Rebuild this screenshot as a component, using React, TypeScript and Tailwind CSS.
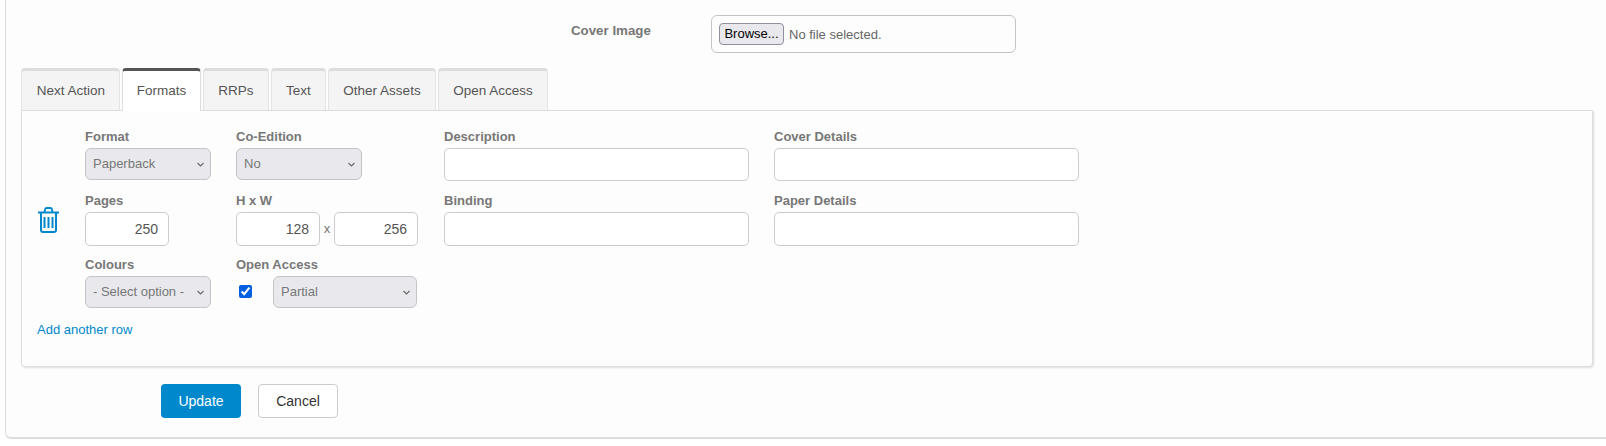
function Label({ children }: { children: React.ReactNode }) {
  return <div className="mb-[3px] h-[17px] text-[13px] font-bold leading-[17px] text-[#777777]">{children}</div>;
}

function Select({ value, className = "" }: { value: string; className?: string }) {
  return (
    <div className={`flex h-8 items-center justify-between rounded-[6px] border border-[#c4c4c4] bg-[#e9e9ed] pl-[7px] pr-[6px] text-[13px] text-[#777777] ${className}`}>
      <span>{value}</span>
      <svg width="7" height="5" viewBox="0 0 7 5" fill="none" stroke="#666666" strokeWidth="1.1">
        <path d="M0.5 1l3 3 3-3" />
      </svg>
    </div>
  );
}

function Input({ value = "", className = "" }: { value?: string; className?: string }) {
  return (
    <div className={`flex h-[34px] items-center justify-end rounded-[5px] border border-[#cccccc] bg-white pr-[10px] text-[14px] text-[#555555] ${className}`}>
      {value}
    </div>
  );
}

function Tab({ label, active = false, className = "" }: { label: string; active?: boolean; className?: string }) {
  return (
    <div
      className={
        active
          ? `-mb-px flex h-[43px] items-center justify-center rounded-t-[4px] border-x border-t-[3px] border-x-[#dddddd] border-t-[#555555] bg-white text-[13.5px] text-[#555555] ${className}`
          : `flex h-[42px] items-center justify-center rounded-t-[4px] border-x border-t-[3px] border-x-[#e4e4e4] border-t-[#dddddd] bg-[#f4f4f4] pt-px text-[13.5px] text-[#555555] ${className}`
      }
    >
      {label}
    </div>
  );
}

export default function App() {
  return (
    <div className="h-[446px] w-[1606px] overflow-hidden bg-white pl-[5px] font-['Liberation_Sans',Arial,sans-serif]">
      <div className="h-[439px] rounded-bl-[6px] border-b-2 border-l border-[#dddddd] bg-[#fdfdfd] pl-[15px]">
        <div className="flex h-[68px] pt-[15px]">
          <div className="ml-[550px] w-[140px] pt-[8px] text-[13.3px] font-bold leading-[15px] text-[#777777]">Cover Image</div>
          <div className="flex h-[38px] w-[305px] items-start rounded-[6px] border border-[#c4c4c4] bg-[#fdfdfd] pl-[7px] pt-[7px] text-[13px] text-[#666666]">
            <div className="flex h-[22px] w-[65px] items-center justify-center rounded-[4px] border border-[#8f8f9d] bg-[#e9e9ed] text-[13px] text-black">Browse...</div>
            <span className="ml-[5px] leading-[23px]">No file selected.</span>
          </div>
        </div>
        <div className="flex gap-[2px]">
          <Tab label="Next Action" className="w-[99px] pl-px" />
          <Tab label="Formats" active className="w-[79px]" />
          <Tab label="RRPs" className="w-[66px]" />
          <Tab label="Text" className="w-[55px]" />
          <Tab label="Other Assets" className="w-[108px]" />
          <Tab label="Open Access" className="w-[110px]" />
        </div>
        <div className="h-[257px] w-[1572px] rounded-b-[4px] border border-[#dddddd] bg-[#fdfdfd] shadow-[1px_1px_2px_rgba(0,0,0,0.12)]">
          <div className="flex pt-[17px]">
            <div className="w-[63px] shrink-0 pl-[16px] pt-[79px]">
              <svg width="21" height="26" viewBox="0 0 21 26" fill="none" stroke="#0088cc" strokeWidth="2">
                <path d="M6.5 5l.6-2.6A1.5 1.5 0 0 1 8.5 1h4a1.5 1.5 0 0 1 1.4 1.4L14.5 5" />
                <path d="M0 5.5h21" />
                <path d="M3 6v17a2 2 0 0 0 2 2h11a2 2 0 0 0 2-2V6" />
                <path d="M6.5 10v11M10.5 10v11M14.5 10v11" />
              </svg>
            </div>
            <div className="flex w-[151px] flex-col gap-[10px]">
              <div className="h-[54px]"><Label>Format</Label><Select value="Paperback" className="mt-[2px] w-[126px]" /></div>
              <div className="h-[54px]"><Label>Pages</Label><Input value="250" className="w-[84px]" /></div>
              <div className="h-[54px]"><Label>Colours</Label><Select value="- Select option -" className="w-[126px]" /></div>
            </div>
            <div className="flex w-[208px] flex-col gap-[10px]">
              <div className="h-[54px]"><Label>Co-Edition</Label><Select value="No" className="mt-[2px] w-[126px]" /></div>
              <div className="h-[54px]">
                <Label>H x W</Label>
                <div className="flex items-center">
                  <Input value="128" className="w-[84px]" />
                  <span className="w-[14px] text-center text-[13px] text-[#777777]">x</span>
                  <Input value="256" className="w-[84px]" />
                </div>
              </div>
              <div className="h-[54px]">
                <Label>Open Access</Label>
                <div className="flex items-center">
                  <input type="checkbox" defaultChecked className="mb-[2px] ml-[3px] h-[13px] w-[13px] accent-[#0060df]" />
                  <Select value="Partial" className="ml-[21px] w-[144px]" />
                </div>
              </div>
            </div>
            <div className="flex w-[330px] flex-col gap-[10px]">
              <div className="h-[54px]"><Label>Description</Label><Input className="mt-px !h-[33px] w-[305px]" /></div>
              <div className="h-[54px]"><Label>Binding</Label><Input className="w-[305px]" /></div>
            </div>
            <div className="flex w-[305px] flex-col gap-[10px]">
              <div className="h-[54px]"><Label>Cover Details</Label><Input className="mt-px !h-[33px] w-[305px]" /></div>
              <div className="h-[54px]"><Label>Paper Details</Label><Input className="w-[305px]" /></div>
            </div>
          </div>
          <div className="mt-[12px] pl-[15px] text-[13px] leading-[15px] text-[#0088cc]">Add another row</div>
        </div>
        <div className="ml-[140px] mt-[17px] flex gap-[17px]">
          <div className="flex h-[34px] w-[80px] items-center justify-center rounded-[4px] bg-[#0088cc] text-[14px] text-white">Update</div>
          <div className="flex h-[34px] w-[80px] items-center justify-center rounded-[4px] border border-[#cccccc] bg-white text-[14px] text-[#333333]">Cancel</div>
        </div>
      </div>
    </div>
  );
}
